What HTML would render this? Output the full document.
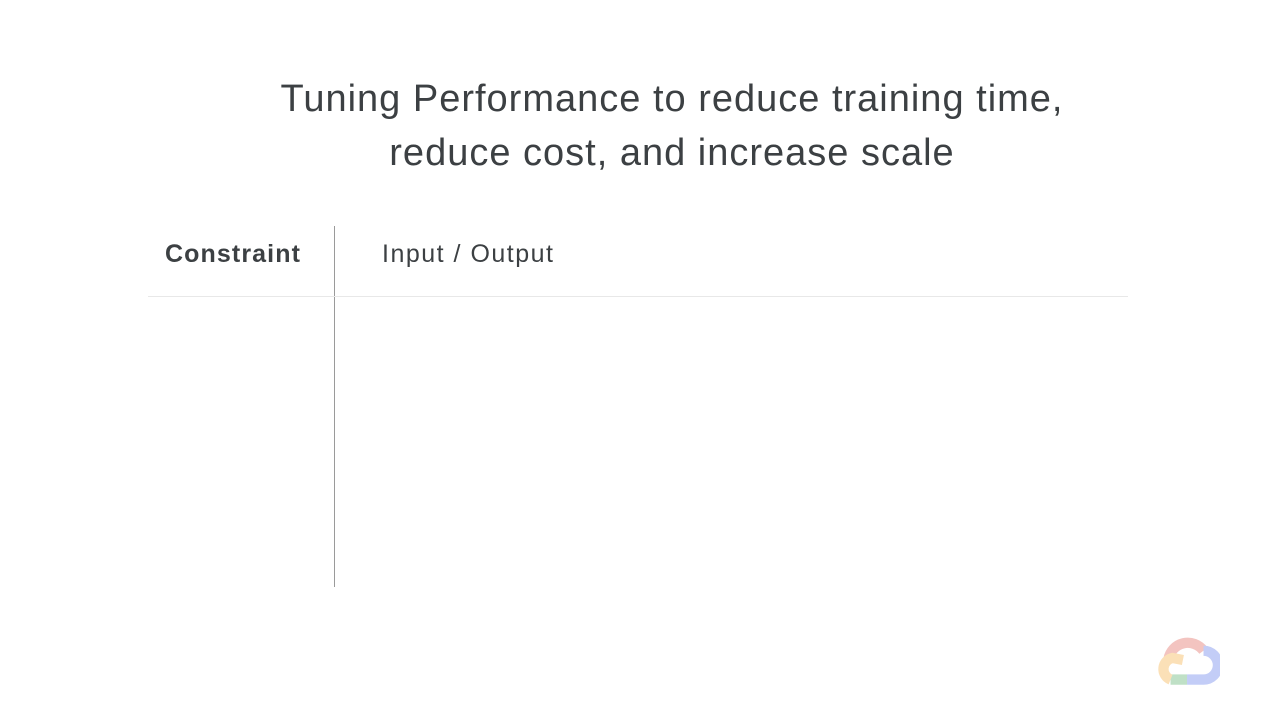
<!DOCTYPE html>
<html><head><meta charset="utf-8"><style>
html,body{margin:0;padding:0;background:#fff;width:1280px;height:720px;overflow:hidden;position:relative;font-family:"Liberation Sans",sans-serif;color:#3c4043}
.t{position:absolute;left:0;width:1344px;text-align:center;font-size:38px;letter-spacing:1.0px;color:#3c4043}
.a{position:absolute}
</style></head><body>
<div class="t" style="top:78px">Tuning Performance to reduce training time,</div>
<div class="t" style="top:132px">reduce cost, and increase scale</div>
<div class="a" style="left:165px;top:240px;font-size:25px;font-weight:bold;letter-spacing:1.1px;color:#3c4043">Constraint</div>
<div class="a" style="left:382px;top:240px;font-size:25px;letter-spacing:1.5px;color:#3c4043">Input / Output</div>
<div class="a" style="left:334px;top:226px;width:1px;height:361px;background:#9a9a9a"></div>
<div class="a" style="left:148px;top:296px;width:980px;height:1px;background:#e8e8e8"></div>
<svg class="a" style="left:1152px;top:632px" width="68" height="56" viewBox="0 0 66 54">
<g fill="none" stroke-width="10" stroke-linecap="butt">
<path d="M16 26 A19 19 0 0 1 50 18" stroke="#f3c4c0"/>
<path d="M50 18 A14 14 0 0 1 50 46 L34 46" stroke="#c3cdf7"/>
<path d="M34 46 L18 46" stroke="#bfe0c6"/>
<path d="M18 46 A11 11 0 0 1 20 25 L30 27" stroke="#fbe0b7"/>
</g>
</svg>
</body></html>
